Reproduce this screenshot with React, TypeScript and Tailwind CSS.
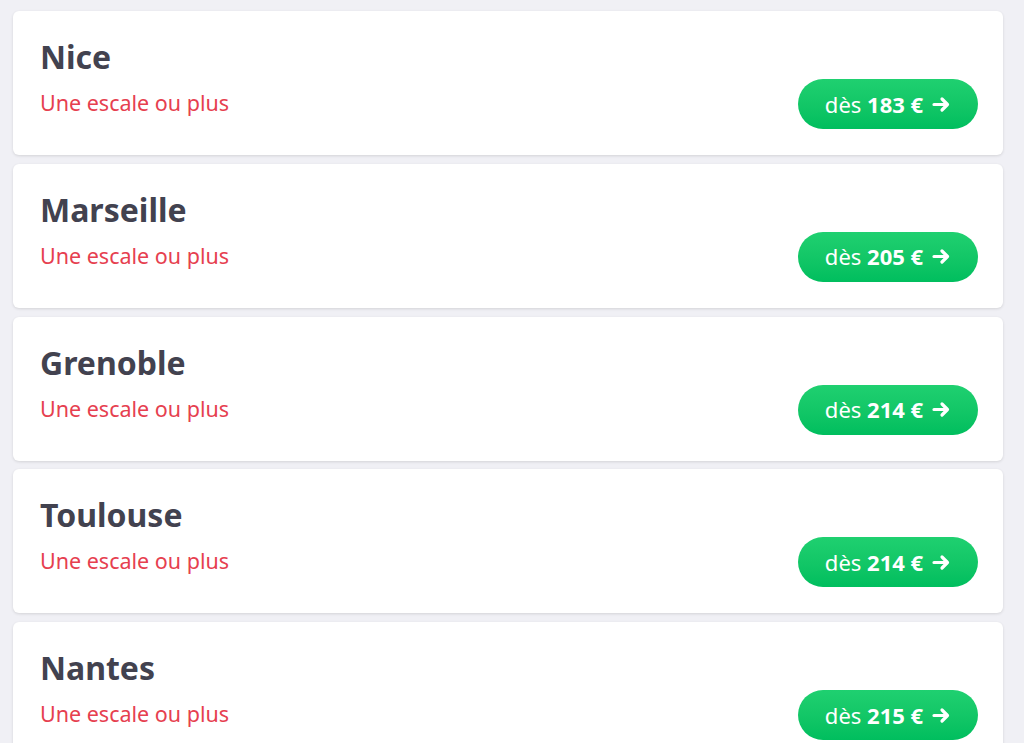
import React from "react";

interface Destination {
    city: string;
    price: number;
}

const destinations: Destination[] = [
    { city: "Nice", price: 183 },
    { city: "Marseille", price: 205 },
    { city: "Grenoble", price: 214 },
    { city: "Toulouse", price: 214 },
    { city: "Nantes", price: 215 },
];

const ArrowRight = () => (
    <svg width="19" height="17" viewBox="0 0 19 17" fill="none" className="ml-[9px]">
        <path d="M2 8.5h13M10 3l5.5 5.5L10 14" stroke="white" strokeWidth="3.2" strokeLinecap="round" strokeLinejoin="round" />
    </svg>
);

export default function App() {
    return (
        <div
            className="min-h-screen bg-[#f0f0f5] pl-[13px] pr-[21px] pt-[11px] flex flex-col gap-[8.75px]"
            style={{ fontFamily: "'Noto Sans', 'Open Sans', sans-serif" }}
        >
            {destinations.map((d) => (
                <div
                    key={d.city}
                    className="h-[144px] shrink-0 bg-white rounded-[6px] shadow-[0_1px_3px_rgba(0,0,0,0.12)] pl-[27px] pr-[25px] pb-[26px] flex items-end justify-between"
                >
                    <div className="pb-[12px]">
                        <h3 className="text-[32px] leading-[38px] font-bold text-[#42424f] -translate-y-[1px]">
                            {d.city}
                        </h3>
                        <p className="text-[21.5px] leading-[28px] text-[#e6404f] mt-[12px]">
                            Une escale ou plus
                        </p>
                    </div>
                    <button className="w-[180px] h-[50px] rounded-full bg-gradient-to-b from-[#1fd070] to-[#00be5e] text-white text-[22px] flex items-center justify-center">
                        <span>dès&nbsp;</span>
                        <span className="font-bold">{d.price} €</span>
                        <ArrowRight />
                    </button>
                </div>
            ))}
        </div>
    );
}
